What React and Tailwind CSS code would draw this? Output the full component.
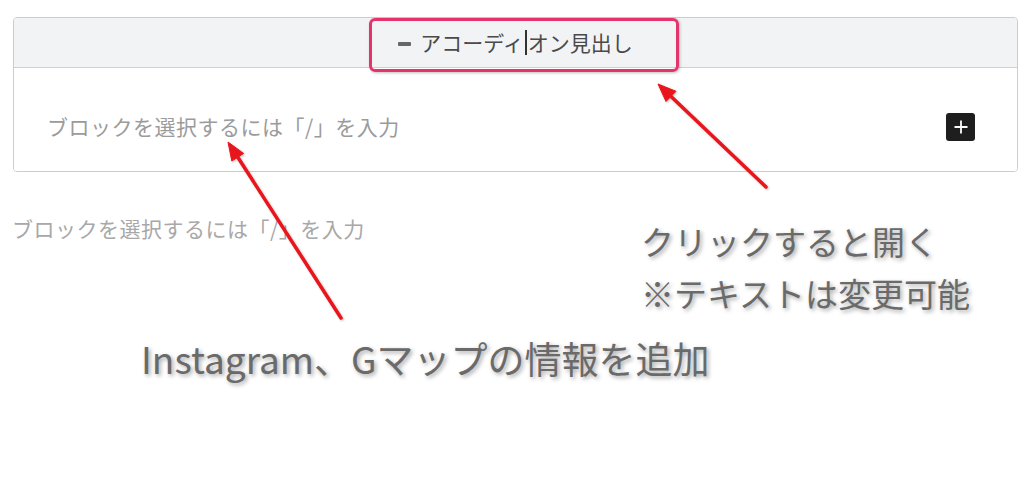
import React from "react";

const jp = { fontFamily: '"Noto Sans CJK JP", "Noto Sans", sans-serif' };

const Arrows = () => (
  <svg className="absolute inset-0 pointer-events-none" width="1024" height="481" viewBox="0 0 1024 481">
    <defs>
      <filter id="shadow" x="-20%" y="-20%" width="140%" height="140%">
        <feDropShadow dx="1" dy="1" stdDeviation="1.2" floodColor="#000" floodOpacity="0.25" />
      </filter>
    </defs>
    <g filter="url(#shadow)" fill="#e8141b" stroke="#e8141b">
      <line x1="766" y1="187" x2="670" y2="95.5" strokeWidth="3.5" strokeLinecap="round" />
      <polygon points="658,84 676,91.3 666,101.5" strokeWidth="1" strokeLinejoin="round" />
      <line x1="341" y1="318" x2="237" y2="156" strokeWidth="3.5" strokeLinecap="round" />
      <polygon points="228,142 243.6,153.4 231.8,161" strokeWidth="1" strokeLinejoin="round" />
    </g>
  </svg>
);

export default function App() {
  return (
    <div className="relative w-[1024px] h-[481px] bg-white overflow-hidden" style={jp}>
      <div className="pt-[17px] pl-[13px] pr-[6px]">
        {/* accordion block */}
        <div className="border border-[#cccccc] rounded-[4px] overflow-hidden">
          <div className="h-[50px] bg-[#f2f3f5] border-b border-[#d0d0d0] flex items-center justify-center">
            <span className="w-[13px] h-[4px] bg-[#666] rounded-[1px] mr-[9px] mt-[2px]" />
            <span className="text-[21px] leading-none text-[#4a4a4a] flex items-center">
              アコーディ
              <span className="w-[2px] h-[25px] bg-[#333] mx-[1px]" />
              オン見出し
            </span>
          </div>
          <div className="h-[103px] bg-white flex items-center justify-between pt-[14px] pl-[33px] pr-[42px]">
            <span className="text-[21px] leading-none tracking-[0.5px] text-[#9b9b9b]">ブロックを選択するには「/」を入力</span>
            <button className="w-[29px] h-[28px] bg-[#1e1e1e] rounded-[3px] flex items-center justify-center">
              <svg width="16" height="16" viewBox="0 0 16 16">
                <path d="M8 1.5v13M1.5 8h13" stroke="#fff" strokeWidth="1.8" />
              </svg>
            </button>
          </div>
        </div>
      </div>

      <p className="mt-[46px] pl-[12px] text-[21px] leading-none tracking-[0.5px] text-[#a8a8a8]">ブロックを選択するには「/」を入力</p>

      {/* annotations */}
      <div className="absolute left-[369px] top-[18px] w-[310px] h-[54px] border-[3px] border-[#e5336c] rounded-[6px] shadow-[1px_1px_3px_rgba(0,0,0,0.25)]" />

      <div className="absolute left-[641px] top-[215px] text-[33px] leading-[52px] font-normal text-[#6a6a6a] [text-shadow:2px_2px_4px_rgba(0,0,0,0.35)]">
        <p>クリックすると開く</p>
        <p>※テキストは変更可能</p>
      </div>

      <p className="absolute left-[141px] top-[334px] text-[37px] leading-[48px] font-normal text-[#6a6a6a] [text-shadow:2px_2px_4px_rgba(0,0,0,0.35)]">
        Instagram、Gマップの情報を追加
      </p>

      <Arrows />
    </div>
  );
}
